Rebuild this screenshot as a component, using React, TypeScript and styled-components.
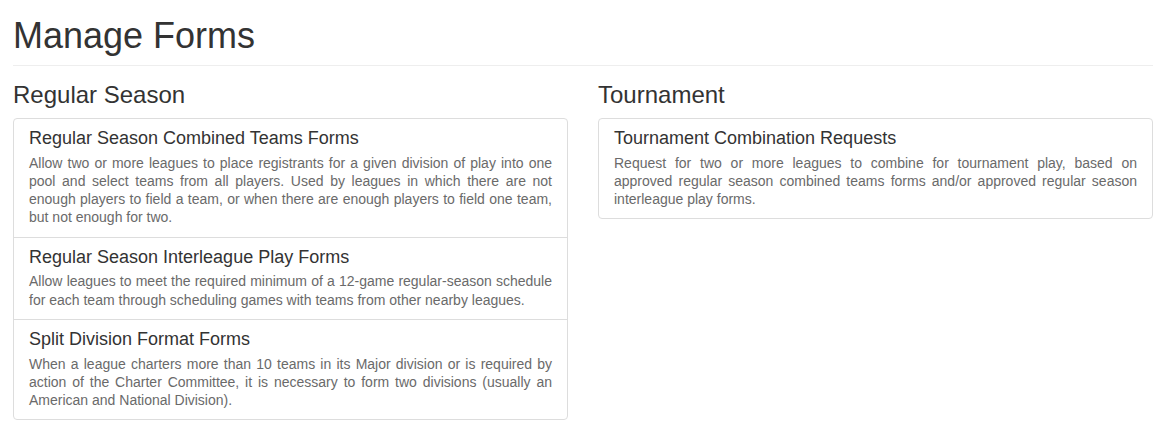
import React from "react";
import styled, { createGlobalStyle } from "styled-components";

const GlobalStyle = createGlobalStyle`
  html, body { margin: 0; padding: 0; background: #fff; }
  body {
    font-family: "Liberation Sans", Arial, Helvetica, sans-serif;
    font-size: 14px;
    line-height: 1.42857;
    color: #333;
  }
  * { box-sizing: border-box; }
`;

const Page = styled.div`
  padding: 0 22px 0 13px;
`;

const PageHeader = styled.div`
  margin: 16px 0 16px;
  padding-bottom: 9px;
  border-bottom: 1px solid #eee;
`;

const Title = styled.h1`
  margin: 0;
  font-size: 36px;
  font-weight: 500;
  line-height: 1.1;
  color: #333;
`;

const Columns = styled.div`
  display: grid;
  grid-template-columns: 1fr 1fr;
  column-gap: 30px;
  align-items: start;
`;

const Section = styled.section``;

const SectionTitle = styled.h3`
  margin: 0 0 10px;
  font-size: 24px;
  font-weight: 500;
  line-height: 1.1;
  color: #333;
`;

const ListGroup = styled.div`
  border: 1px solid #ddd;
  border-radius: 4px;
  background: #fff;
`;

const Item = styled.div`
  padding: 10px 15px;
  & + & {
    border-top: 1px solid #ddd;
  }
`;

const ItemHeading = styled.h4`
  margin: 0 0 5px;
  font-size: 18px;
  font-weight: 500;
  line-height: 1.1;
  color: #333;
`;

const ItemText = styled.p`
  margin: 0;
  font-size: 14px;
  line-height: 1.3;
  color: #6a6a6a;
  text-align: justify;
`;

type Form = { title: string; text: string };

const regular: Form[] = [
  {
    title: "Regular Season Combined Teams Forms",
    text: "Allow two or more leagues to place registrants for a given division of play into one pool and select teams from all players. Used by leagues in which there are not enough players to field a team, or when there are enough players to field one team, but not enough for two.",
  },
  {
    title: "Regular Season Interleague Play Forms",
    text: "Allow leagues to meet the required minimum of a 12-game regular-season schedule for each team through scheduling games with teams from other nearby leagues.",
  },
  {
    title: "Split Division Format Forms",
    text: "When a league charters more than 10 teams in its Major division or is required by action of the Charter Committee, it is necessary to form two divisions (usually an American and National Division).",
  },
];

const tournament: Form[] = [
  {
    title: "Tournament Combination Requests",
    text: "Request for two or more leagues to combine for tournament play, based on approved regular season combined teams forms and/or approved regular season interleague play forms.",
  },
];

const FormList = ({ forms }: { forms: Form[] }) => (
  <ListGroup>
    {forms.map((f) => (
      <Item key={f.title}>
        <ItemHeading>{f.title}</ItemHeading>
        <ItemText>{f.text}</ItemText>
      </Item>
    ))}
  </ListGroup>
);

export default function App() {
  return (
    <>
      <GlobalStyle />
      <Page>
        <PageHeader>
          <Title>Manage Forms</Title>
        </PageHeader>
        <Columns>
          <Section>
            <SectionTitle>Regular Season</SectionTitle>
            <FormList forms={regular} />
          </Section>
          <Section>
            <SectionTitle>Tournament</SectionTitle>
            <FormList forms={tournament} />
          </Section>
        </Columns>
      </Page>
    </>
  );
}
